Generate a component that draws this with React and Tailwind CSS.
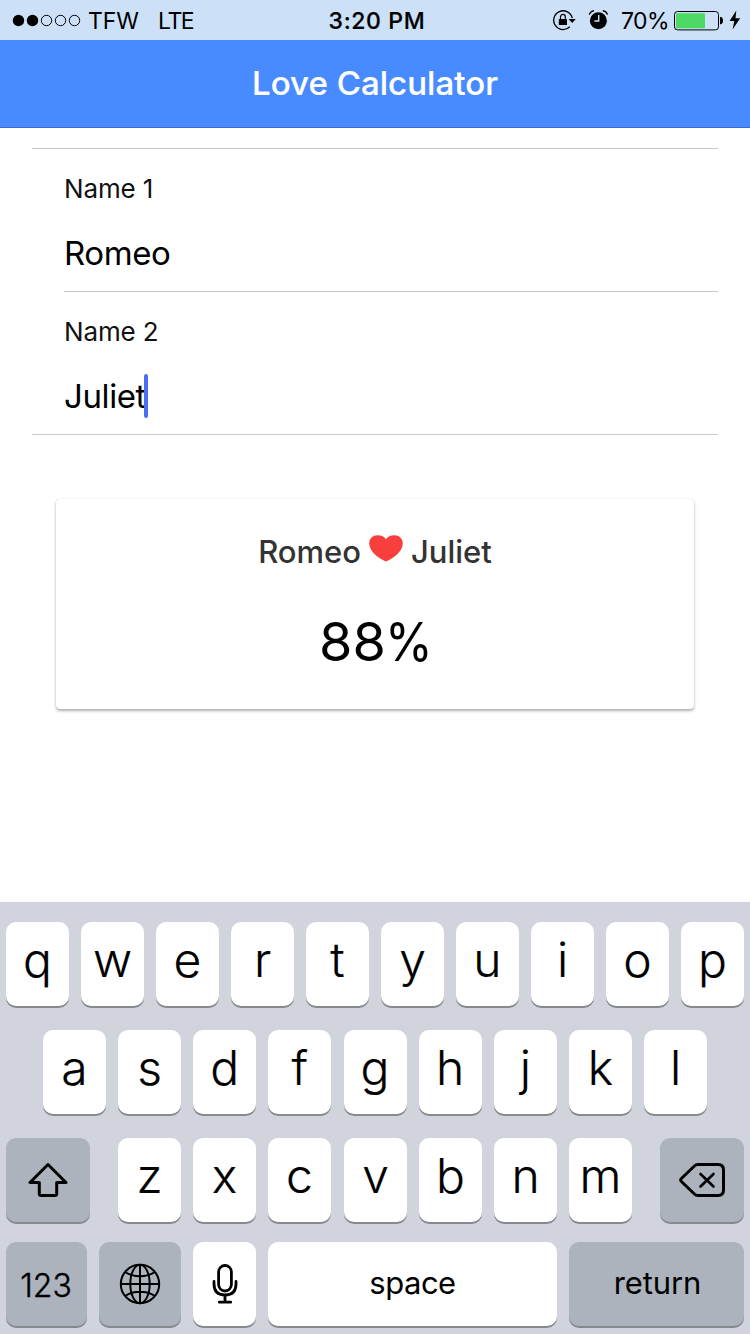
import React from 'react';

function StatusBar() {
  return (
    <div className="grid h-10 grid-cols-[1fr_auto_1fr] items-center bg-[#cce1f8] text-[23px] leading-10 text-black">
      <div className="flex items-center pl-[12px]">
        <svg width="70" height="14" viewBox="0 0 70 14" className="mr-[6px]">
          <circle cx="6.5" cy="7.5" r="5.7" />
          <circle cx="20.5" cy="7.5" r="5.7" />
          <g fill="none" stroke="#000" strokeWidth="1">
            <circle cx="34.5" cy="7.5" r="5.2" />
            <circle cx="48.5" cy="7.5" r="5.2" />
            <circle cx="62.5" cy="7.5" r="5.2" />
          </g>
        </svg>
        <span className="w-[70px] pt-[2px] leading-[38px] tracking-[-0.1px]">TFW</span>
        <span className="pt-[2px] leading-[38px] tracking-[-1.4px]">LTE</span>
      </div>
      <div className="pl-[4px] pt-[2px] font-medium leading-[38px] tracking-[0.65px] [-webkit-text-stroke:0.2px_#000]">3:20 PM</div>
      <div className="flex items-center justify-end pr-[9px]">
        <svg width="24" height="24" viewBox="0 0 24 24" className="mr-[12px]">
          <path d="M20.3 10.2A9.4 9.4 0 1 0 17.8 18.8" fill="none" stroke="#000" strokeWidth="1.3" />
          <path d="M16.6 10.9h7.2l-3.6 4z" />
          <rect x="6.8" y="11" width="8.2" height="6" rx="0.5" />
          <path d="M8.5 11.5V8.8a2.4 2.4 0 0 1 4.8 0v2.7" fill="none" stroke="#000" strokeWidth="1.2" />
        </svg>
        <svg width="20" height="22" viewBox="0 0 20 22" className="mr-[12px]">
          <circle cx="10.4" cy="11.8" r="8.5" />
          <path d="M1.3 5.6Q2.4 2.4 6 1.7M19.5 5.6Q18.4 2.4 14.8 1.7" fill="none" stroke="#000" strokeWidth="1.3" />
          <path d="M10.7 6v6H6.4" fill="none" stroke="#cce1f8" strokeWidth="1.4" />
        </svg>
        <span className="w-[54px] pl-px pt-[2px] leading-[38px] tracking-[-0.6px]">70%</span>
        <svg width="50" height="20" viewBox="0 0 50 20" className="mr-[5px] mt-px">
          <rect x=".5" y=".5" width="44" height="18.4" rx="3" fill="none" stroke="#000" />
          <rect x="2" y="2.2" width="29" height="15" rx="1" fill="#4cd964" />
          <path d="M46 6h.8q2.2.4 2.2 3.6t-2.2 3.6H46z" />
        </svg>
        <svg width="12" height="20" viewBox="0 0 12 20">
          <path d="M7.3 .5L.6 11h4.7L3.6 19.5 11.2 8.3H6.5z" />
        </svg>
      </div>
    </div>
  );
}

function Field({ label, value, focused }) {
  return (
    <div className="h-[142px] pt-5">
      <div className="text-[26px] leading-[39px] tracking-[-0.15px] text-[#111]">{label}</div>
      <div className="mt-[7px] flex h-[76px] items-center text-[33px] tracking-[-0.4px] text-black">
        <span className="pt-[2px]">{value}</span>
        {focused && <span className="-ml-[2px] h-11 w-1 rounded-[2px] bg-[#4a6ff0]" />}
      </div>
    </div>
  );
}

function Result() {
  return (
    <div className="mx-14 mt-16 h-[210px] rounded bg-white text-center shadow-[0_2px_3px_rgba(0,0,0,0.3),0_0_1px_rgba(0,0,0,0.2)]">
      <div className="flex h-[105px] items-center justify-center pt-[2px] text-[31px] font-medium text-[#333]">
        <span>Romeo</span>
        <svg width="34" height="27" viewBox="0 0 34 27" className="mb-[8px] ml-[8px] mr-[8px]">
          <path fill="#f93e3e" d="M17 4.2C14.8 1 11.7.2 8.8.2 3.8.2.2 3.6.2 8.3.2 16 8.6 23.2 17 26.6 25.4 23.2 33.8 16 33.8 8.3 33.8 3.6 30.2.2 25.2.2 22.3.2 19.2 1 17 4.2z" />
        </svg>
        <span>Juliet</span>
      </div>
      <div className="flex h-[75px] justify-center pl-[7px] text-[54px] leading-[75px] text-black">
        <span className="tracking-[0.2px]">88</span>
        <span className="-ml-px origin-left scale-x-90">%</span>
      </div>
    </div>
  );
}

const KEY = 'flex h-[84px] shrink-0 items-center justify-center rounded-[10px] shadow-[0_2px_0_#878a8d]';

function Letter({ children }) {
  return <div className={`${KEY} w-[63px] bg-white pb-[9px] text-[48px] font-light [-webkit-text-stroke:0.2px_#000]`}>{children}</div>;
}

function Keyboard() {
  return (
    <div className="h-[432px] bg-[#d1d4dc] pt-5 text-black">
      <div className="flex gap-3 px-[6px]">
        {'qwertyuiop'.split('').map((c) => <Letter key={c}>{c}</Letter>)}
      </div>
      <div className="mt-6 flex justify-between pl-[43px] pr-[43px]">
        {'asdfghjkl'.split('').map((c) => <Letter key={c}>{c}</Letter>)}
      </div>
      <div className="mt-6 flex justify-between px-[6px]">
        <div className={`${KEY} w-[84px] bg-[#acb3bd]`}>
          <svg width="40" height="36" viewBox="0 0 40 36" fill="none" stroke="#000" strokeWidth="3" strokeLinejoin="round">
            <path d="M20 2.5L2 20.5H11.3V31.5Q11.3 33.5 13.3 33.5H26.7Q28.7 33.5 28.7 31.5V20.5H38z" />
          </svg>
        </div>
        <div className="flex w-[514px] gap-3">
          {'zxc'.split('').map((c) => <Letter key={c}>{c}</Letter>)}
          <div className="ml-px flex gap-3">
            {'vbnm'.split('').map((c) => <Letter key={c}>{c}</Letter>)}
          </div>
        </div>
        <div className={`${KEY} w-[84px] bg-[#acb3bd]`}>
          <svg width="46" height="34" viewBox="0 0 46 34" fill="none" stroke="#000" strokeWidth="3" strokeLinejoin="round" strokeLinecap="round">
            <path d="M19 1.5H39Q44.5 1.5 44.5 7V27Q44.5 32.5 39 32.5H19Q17 32.5 15.4 31L2.4 18.5Q.8 17 2.4 15.5L15.4 3Q17 1.5 19 1.5z" />
            <path d="M21.5 11L34.5 23.5M34.5 11L21.5 23.5" strokeWidth="2.6" />
          </svg>
        </div>
      </div>
      <div className="mt-5 flex gap-3 px-[6px] text-[31px]">
        <div className={`${KEY} w-[81px] bg-[#acb3bd] pr-px pt-[3px] text-[32px] font-light [-webkit-text-stroke:0.4px_#000]`}>123</div>
        <div className={`${KEY} w-[82px] bg-[#acb3bd]`}>
          <svg width="42" height="42" viewBox="0 0 42 42" fill="none" stroke="#000" strokeWidth="2">
            <circle cx="21" cy="21" r="19.2" />
            <ellipse cx="21" cy="21" rx="9.7" ry="19.2" />
            <path d="M21 1.8v38.4M1.8 21h38.4M6 9Q12.5 13.3 21 13.3T36 9M6 33Q12.5 28.7 21 28.7T36 33" />
          </svg>
        </div>
        <div className={`${KEY} w-[63px] bg-white`}>
          <svg width="26" height="40" viewBox="0 0 26 40" fill="none" stroke="#000" strokeWidth="2.8" strokeLinecap="round">
            <rect x="6.6" y="1.5" width="12.8" height="25.5" rx="6.4" />
            <path d="M2 17.5V20Q2 31 13 31T24 20V17.5M13 31V38.2M7.3 38.2H18.7" />
          </svg>
        </div>
        <div className={`${KEY} w-[289px] bg-white pb-px tracking-[-0.5px]`}>space</div>
        <div className={`${KEY} w-[175px] bg-[#acb3bd] pb-px pl-[2px] tracking-[-0.15px]`}>return</div>
      </div>
    </div>
  );
}

export default function App() {
  return (
    <div className="flex h-[1334px] w-[750px] flex-col overflow-hidden bg-white font-['Inter',sans-serif]">
      <StatusBar />
      <header className="h-[88px] border-b border-[#386ccc] bg-[#488aff] text-center text-[33px] font-medium leading-[86px] tracking-[0.05px] text-white [-webkit-text-stroke:0.2px_#fff]">
        Love Calculator
      </header>
      <main className="flex-1 pt-5">
        <div className="ml-8 mr-8 border-y border-[#c8c7cc] pl-8">
          <Field label="Name 1" value="Romeo" />
          <div className="h-px bg-[#c8c7cc]" />
          <Field label="Name 2" value="Juliet" focused />
        </div>
        <Result />
      </main>
      <Keyboard />
    </div>
  );
}
